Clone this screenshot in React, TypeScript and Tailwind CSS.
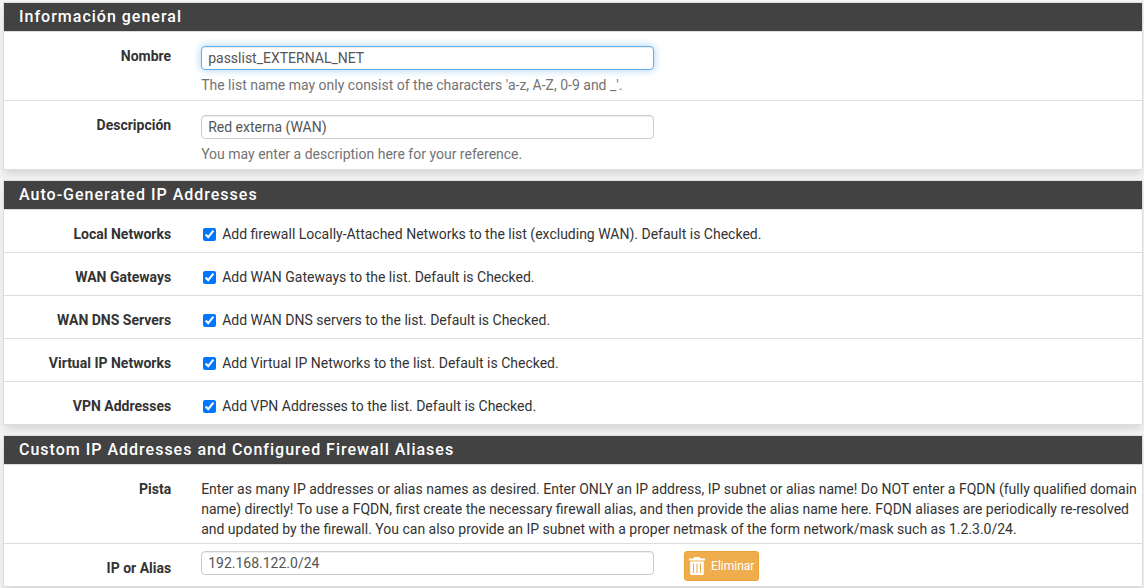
import { useState } from 'react';
import type { ReactNode } from 'react';

const inputClass =
  'block h-6 w-full rounded border border-[#ccc] bg-white px-1.5 text-sm text-[#555] shadow-[inset_0_1px_1px_rgba(0,0,0,0.075)] outline-none focus:border-[#66afe9] focus:shadow-[inset_0_1px_1px_rgba(0,0,0,0.075),0_0_8px_rgba(102,175,233,0.6)]';

const rowClass = '-mr-2.5 -ml-[11px] flex items-start';

const labelClass = 'w-1/6 shrink-0 px-[15px] pt-3.5 text-right text-sm font-bold';

function Panel({ title, children }: { title: string; children: ReactNode }) {
  return (
    <section className="border border-[#ddd] bg-white shadow-[0_6px_8px_-2px_rgba(0,0,0,0.12)]">
      <h2 className="bg-[#424242] px-[15px] text-base leading-7 font-medium tracking-[1px] text-white">
        {title}
      </h2>
      <div className="divide-y divide-[#ddd] overflow-hidden border-t border-[#ddd]">{children}</div>
    </section>
  );
}

function TextRow({ id, label, value, help, focused }: { id: string; label: string; value: string; help: string; focused?: boolean }) {
  return (
    <div>
      <div className={rowClass}>
        <label htmlFor={id} className={labelClass}>{label}</label>
        <div className="w-5/12 px-[15px] pt-3.5 pb-[5px]">
          <input
            id={id}
            type="text"
            defaultValue={value}
            autoFocus={focused}
            spellCheck={false}
            className={inputClass}
          />
          <p className="mt-[5px] text-sm text-[#737373]">{help}</p>
        </div>
      </div>
    </div>
  );
}

function CheckRow({ id, label, text }: { id: string; label: string; text: string }) {
  const [checked, setChecked] = useState(true);
  return (
    <div>
      <div className={rowClass}>
        <label htmlFor={id} className={labelClass}>{label}</label>
        <div className="w-10/12 px-[15px] pt-3.5 pb-2">
          <label className="flex items-start text-sm">
            <input
              id={id}
              type="checkbox"
              checked={checked}
              onChange={(e) => setChecked(e.target.checked)}
              className="mt-1 mr-1.5 ml-0.5 size-[13px]"
            />
            {text}
          </label>
        </div>
      </div>
    </div>
  );
}

function TrashIcon() {
  return (
    <svg viewBox="0 0 16 18" className="h-[18px] w-4" fill="currentColor" aria-hidden="true">
      <path
        fillRule="evenodd"
        d="M5.500 0h5l1 1.500H16v2H0v-2h4.500zM1.200 4.500h13.600V16.500a1.500 1.500 0 0 1-1.500 1.500H2.700a1.500 1.500 0 0 1-1.500-1.500zM4 6.500v9.500h1V6.500zm3.500 0v9.500h1V6.500zm3.500 0v9.500h1V6.500z"
      />
    </svg>
  );
}

const checks = [
  { id: 'localnets', label: 'Local Networks', text: 'Add firewall Locally-Attached Networks to the list (excluding WAN). Default is Checked.' },
  { id: 'wangateips', label: 'WAN Gateways', text: 'Add WAN Gateways to the list. Default is Checked.' },
  { id: 'wandnsips', label: 'WAN DNS Servers', text: 'Add WAN DNS servers to the list. Default is Checked.' },
  { id: 'vips', label: 'Virtual IP Networks', text: 'Add Virtual IP Networks to the list. Default is Checked.' },
  { id: 'vpnips', label: 'VPN Addresses', text: 'Add VPN Addresses to the list. Default is Checked.' },
];

export default function App() {
  return (
    <form
      className="flex min-h-screen flex-col gap-2.5 bg-[#f3f3f3] pt-0.5 pr-px pl-[3px] font-['Roboto',sans-serif] text-[#333]"
      onSubmit={(e) => e.preventDefault()}
    >
      <Panel title="Información general">
        <TextRow
          id="name"
          label="Nombre"
          value="passlist_EXTERNAL_NET"
          help="The list name may only consist of the characters 'a-z, A-Z, 0-9 and _'."
          focused
        />
        <TextRow
          id="descr"
          label="Descripción"
          value="Red externa (WAN)"
          help="You may enter a description here for your reference."
        />
      </Panel>

      <Panel title="Auto-Generated IP Addresses">
        {checks.map((c) => (
          <CheckRow key={c.id} {...c} />
        ))}
      </Panel>

      <Panel title="Custom IP Addresses and Configured Firewall Aliases">
        <div>
          <div className={rowClass}>
            <div className={labelClass}>Pista</div>
            <p className="w-10/12 pt-3.5 pr-3.5 pb-1 pl-[15px] text-sm">
              Enter as many IP addresses or alias names as desired. Enter ONLY an IP address, IP subnet or alias name!
              Do NOT enter a FQDN (fully qualified domain name) directly! To use a FQDN, first create the necessary
              firewall alias, and then provide the alias name here. FQDN aliases are periodically re-resolved and
              updated by the firewall. You can also provide an IP subnet with a proper netmask of the form
              network/mask such as 1.2.3.0/24.
            </p>
          </div>
        </div>
        <div>
          <div className={rowClass}>
            <label htmlFor="address" className={labelClass}>IP or Alias</label>
            <div className="w-5/12 px-[15px] pt-[7px]">
              <input id="address" type="text" defaultValue="192.168.122.0/24" className={inputClass} />
            </div>
            <div className="px-[15px] pt-[7px] pb-[5px]">
              <button
                type="button"
                className="flex h-[30px] items-center gap-1.5 rounded-[3px] border border-[#eea236] bg-[#f0ad4e] px-1 text-xs text-white"
              >
                <TrashIcon />
                Eliminar
              </button>
            </div>
          </div>
        </div>
      </Panel>
    </form>
  );
}
